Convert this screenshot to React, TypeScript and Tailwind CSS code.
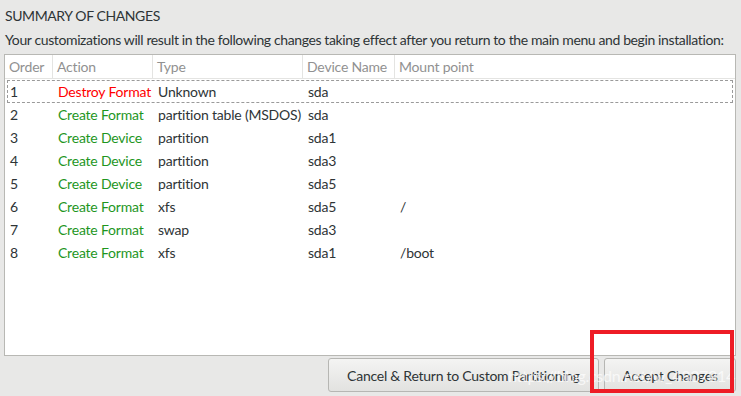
import React from "react";

const rows = [
  ["1", "Destroy Format", "Unknown", "sda", "", true],
  ["2", "Create Format", "partition table (MSDOS)", "sda", "", false],
  ["3", "Create Device", "partition", "sda1", "", false],
  ["4", "Create Device", "partition", "sda3", "", false],
  ["5", "Create Device", "partition", "sda5", "", false],
  ["6", "Create Format", "xfs", "sda5", "/", false],
  ["7", "Create Format", "swap", "sda3", "", false],
  ["8", "Create Format", "xfs", "sda1", "/boot", false],
] as const;

export default function App() {
  return (
    <div
      className="relative w-[741px] h-[396px] bg-[#e8e8e7] text-[#2e3436] text-[14px] overflow-hidden whitespace-nowrap"
      style={{ fontFamily: 'Lato, "Open Sans", sans-serif' }}
    >
      <div className="pl-[5px] pt-[5px] leading-[22px] h-[29px] tracking-[-0.4px]">SUMMARY OF CHANGES</div>
      <div className="pl-[5px] leading-[22px] h-[25px] tracking-[-0.38px]">
        Your customizations will result in the following changes taking effect after you return to the main menu and begin installation:
      </div>
      <div className="ml-[4px] w-[732px] h-[302px] bg-white border border-[#b8b8b4] tracking-[-0.2px]">
        <div className="flex h-[24px] items-center border-b border-[#e4e4e2] text-[#919191]">
          <div className="w-[48px] pl-[4px] h-full flex items-center border-r border-[#e4e4e2]">Order</div>
          <div className="w-[100px] pl-[4px] h-full flex items-center border-r border-[#e4e4e2]">Action</div>
          <div className="w-[150px] pl-[4px] h-full flex items-center border-r border-[#e4e4e2]">Type</div>
          <div className="w-[92px] pl-[4px] h-full flex items-center border-r border-[#e4e4e2]">Device Name</div>
          <div className="flex-1 pl-[4px] h-full flex items-center">Mount point</div>
        </div>
        <div className="pt-[1px]">
          {rows.map(([o, a, t, d, m, sel]) => (
            <div
              key={o}
              className={
                "flex h-[23px] items-center mx-[2px] " +
                (sel ? "border border-dashed border-[#9a9a9a]" : "border border-transparent")
              }
            >
              <div className="w-[48px] pl-[2px]">{o}</div>
              <div className={"w-[100px] pl-[2px] " + (a.startsWith("Destroy") ? "text-[#ff0000]" : "text-[#1e961e]")}>
                {a}
              </div>
              <div className="w-[150px] pl-[2px]">{t}</div>
              <div className="w-[92px] pl-[2px]">{d}</div>
              <div className="flex-1 pl-[2px]">{m}</div>
            </div>
          ))}
        </div>
      </div>
      <div className="flex justify-end gap-[5px] pr-[5px] pt-[2px]">
        <button className="w-[271px] h-[34px] rounded-[3px] border border-[#b6b6b3] bg-gradient-to-b from-[#f4f4f3] to-[#e2e2e0] text-[#2e3436] text-[14px] tracking-[-0.25px]">
          Cancel &amp; Return to Custom Partitioning
        </button>
        <button className="w-[132px] h-[34px] rounded-[3px] border border-[#b6b6b3] bg-gradient-to-b from-[#f4f4f3] to-[#e2e2e0] text-[#2e3436] text-[14px] tracking-[-0.25px]">
          Accept Changes
        </button>
      </div>
      <div className="absolute left-[508px] top-[364px] text-[16px] text-white/70 pointer-events-none tracking-[-0.3px]">
        https://blog.csdn.net/w_4307814
      </div>
      <div className="absolute left-[590px] top-[330px] w-[144px] h-[63px] border-[4px] border-[#ee1c25] pointer-events-none" />
    </div>
  );
}
